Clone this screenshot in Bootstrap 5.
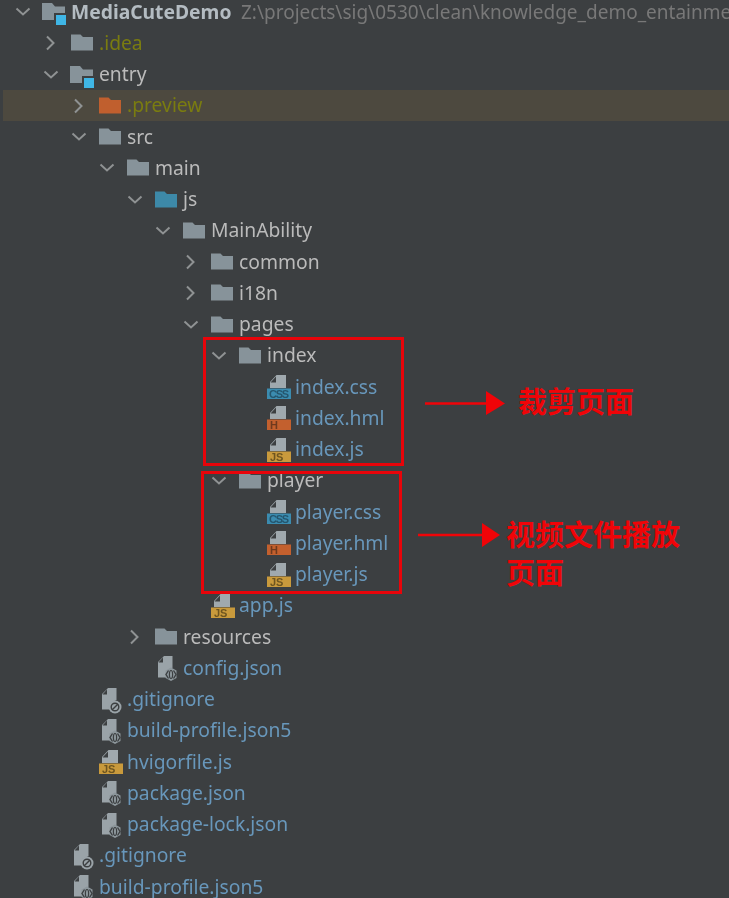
<!DOCTYPE html>
<html lang="en">
<head>
<meta charset="utf-8">
<title>Project tree</title>
<link rel="stylesheet" href="https://cdn.jsdelivr.net/npm/bootstrap@5.3.0/dist/css/bootstrap.min.css">
<style>
html,body{height:100%;}
body{background:#3c3f41;overflow:hidden;font-family:"Noto Sans","Open Sans",sans-serif;position:relative;}
.tree{margin-top:-3.6px;filter:blur(.5px);}
.tree-row{height:31.25px;font-size:19.3px;color:#bbb;white-space:nowrap;}
.tree-row.sel{background:#4d493f;margin-left:3px;}
.l0{padding-left:15px}.l1{padding-left:43px}.l2{padding-left:71px}.l3{padding-left:99px}.l4{padding-left:127px}.l5{padding-left:155px}.l6{padding-left:183px}.l7{padding-left:211px}.l8{padding-left:239px}
.sel.l2{padding-left:68px}
.chev{width:28px;height:24px;flex:none;}
.ico{width:28px;height:24px;flex:none;overflow:visible;}
.fname{color:#6897bb;}
.ign{color:#7a7c10;}
.root{font-weight:700;color:#b4bcc2;}
.pathtxt{color:#787878;margin-left:9.500px;font-size:19px;}
.redbox{position:absolute;border:3px solid #e8040a;}
.box-a{left:203px;top:337px;width:201px;height:129px;}
.box-b{left:201px;top:471px;width:201px;height:123px;}
.note{position:absolute;color:#f00408;font-family:"Liberation Serif","Noto Sans CJK SC",serif;font-weight:700;font-size:29px;line-height:38px;white-space:nowrap;}
.note-a{left:518px;top:384px;}
.note-b{left:506px;top:517px;}
.arrow{position:absolute;}
.arrow-a{left:424px;top:390px;}
.arrow-b{left:417px;top:522px;}
text{font-family:"Liberation Sans",sans-serif;font-weight:700;font-size:11px;}
</style>
</head>
<body>
<svg width="0" height="0" class="d-block position-absolute">
<defs>
<path id="cd" d="M1.500 8.500l6.500 6 6.500-6" fill="none" stroke="#8f9293" stroke-width="2"/>
<path id="cr" d="M4 5.500l6.500 6.500-6.500 6.500" fill="none" stroke="#8f9293" stroke-width="2"/>
<path id="fo" d="M0 3.500h9.500l2.500 2.500H22V19.500H0z"/>
<g id="mod"><path d="M-1 3h10l3 3.500H22V20H-1z" fill="#87939a"/><rect x="11" y="13" width="13" height="13" fill="#3c3f41"/><rect x="13" y="15" width="10" height="10" fill="#3fb6e6"/></g>
<path id="sh" d="M9.500 0H19V13H3V7zM9 1.500V7.500H3.500z" fill="#a0a9ae" fill-rule="evenodd"/>
<g id="css"><use href="#sh"/><rect y="13.500" width="24" height="10.500" fill="#3b8cb0"/><text x="12" y="22.800" text-anchor="middle" fill="#25566e" textLength="20">CSS</text></g>
<g id="htm"><use href="#sh"/><rect y="13.500" width="24" height="10.500" fill="#c3602e"/><text x="3" y="22.800" fill="#6f3a1e">H</text></g>
<g id="jsf"><use href="#sh"/><rect y="13.500" width="24" height="10.500" fill="#c99a3c"/><text x="3" y="22.800" fill="#6e5520">JS</text></g>
<g id="jsn"><path d="M9 0h8.500v12l-6 3 0 6.500H3V6zM8 1.500V6.500H3.500z" fill="#9aa3a8" fill-rule="evenodd"/><path d="M16 11.500l5.500 3v7.500l-5.500 3-5.500-3v-7.500z" fill="#8d979c"/><path d="M13.500 14.500l-2.500 4 2.500 4M18.500 14.500l2.500 4-2.500 4" fill="none" stroke="#3c3f41" stroke-width="1.400"/><ellipse cx="16" cy="18.500" rx="1.600" ry="4" fill="none" stroke="#3c3f41" stroke-width="1.200"/></g>
<g id="ign"><path d="M9 0h8.500v12l-6 3 0 6.500H3V6zM8 1.500V6.500H3.500z" fill="#9aa3a8" fill-rule="evenodd"/><circle cx="16" cy="19" r="6.500" fill="#9aa3a8"/><circle cx="16" cy="19" r="3.800" fill="none" stroke="#3c3f41" stroke-width="1.400"/><path d="M13 22l6-6" stroke="#3c3f41" stroke-width="1.400"/></g>
</defs>
</svg>
<div class="tree">
<div class="tree-row d-flex align-items-center l0"><svg class="chev"><use href="#cd"/></svg><svg class="ico"><use href="#mod"/></svg><span class="root">MediaCuteDemo</span><span class="pathtxt">Z:\projects\sig\0530\clean\knowledge_demo_entainme</span></div>
<div class="tree-row d-flex align-items-center l1"><svg class="chev"><use href="#cr"/></svg><svg class="ico" fill="#87939a"><use href="#fo"/></svg><span class="ign">.idea</span></div>
<div class="tree-row d-flex align-items-center l1"><svg class="chev"><use href="#cd"/></svg><svg class="ico"><use href="#mod"/></svg><span>entry</span></div>
<div class="tree-row sel d-flex align-items-center l2"><svg class="chev"><use href="#cr"/></svg><svg class="ico" fill="#c05f2e"><use href="#fo"/></svg><span class="ign">.preview</span></div>
<div class="tree-row d-flex align-items-center l2"><svg class="chev"><use href="#cd"/></svg><svg class="ico" fill="#87939a"><use href="#fo"/></svg><span>src</span></div>
<div class="tree-row d-flex align-items-center l3"><svg class="chev"><use href="#cd"/></svg><svg class="ico" fill="#87939a"><use href="#fo"/></svg><span>main</span></div>
<div class="tree-row d-flex align-items-center l4"><svg class="chev"><use href="#cd"/></svg><svg class="ico" fill="#3d89a8"><use href="#fo"/></svg><span>js</span></div>
<div class="tree-row d-flex align-items-center l5"><svg class="chev"><use href="#cd"/></svg><svg class="ico" fill="#87939a"><use href="#fo"/></svg><span>MainAbility</span></div>
<div class="tree-row d-flex align-items-center l6"><svg class="chev"><use href="#cr"/></svg><svg class="ico" fill="#87939a"><use href="#fo"/></svg><span>common</span></div>
<div class="tree-row d-flex align-items-center l6"><svg class="chev"><use href="#cr"/></svg><svg class="ico" fill="#87939a"><use href="#fo"/></svg><span>i18n</span></div>
<div class="tree-row d-flex align-items-center l6"><svg class="chev"><use href="#cd"/></svg><svg class="ico" fill="#87939a"><use href="#fo"/></svg><span>pages</span></div>
<div class="tree-row d-flex align-items-center l7"><svg class="chev"><use href="#cd"/></svg><svg class="ico" fill="#87939a"><use href="#fo"/></svg><span>index</span></div>
<div class="tree-row d-flex align-items-center l8"><span class="chev"></span><svg class="ico"><use href="#css"/></svg><span class="fname">index.css</span></div>
<div class="tree-row d-flex align-items-center l8"><span class="chev"></span><svg class="ico"><use href="#htm"/></svg><span class="fname">index.hml</span></div>
<div class="tree-row d-flex align-items-center l8"><span class="chev"></span><svg class="ico"><use href="#jsf"/></svg><span class="fname">index.js</span></div>
<div class="tree-row d-flex align-items-center l7"><svg class="chev"><use href="#cd"/></svg><svg class="ico" fill="#87939a"><use href="#fo"/></svg><span>player</span></div>
<div class="tree-row d-flex align-items-center l8"><span class="chev"></span><svg class="ico"><use href="#css"/></svg><span class="fname">player.css</span></div>
<div class="tree-row d-flex align-items-center l8"><span class="chev"></span><svg class="ico"><use href="#htm"/></svg><span class="fname">player.hml</span></div>
<div class="tree-row d-flex align-items-center l8"><span class="chev"></span><svg class="ico"><use href="#jsf"/></svg><span class="fname">player.js</span></div>
<div class="tree-row d-flex align-items-center l6"><span class="chev"></span><svg class="ico"><use href="#jsf"/></svg><span class="fname">app.js</span></div>
<div class="tree-row d-flex align-items-center l4"><svg class="chev"><use href="#cr"/></svg><svg class="ico" fill="#87939a"><use href="#fo"/></svg><span>resources</span></div>
<div class="tree-row d-flex align-items-center l4"><span class="chev"></span><svg class="ico"><use href="#jsn"/></svg><span class="fname">config.json</span></div>
<div class="tree-row d-flex align-items-center l2"><span class="chev"></span><svg class="ico"><use href="#ign"/></svg><span class="fname">.gitignore</span></div>
<div class="tree-row d-flex align-items-center l2"><span class="chev"></span><svg class="ico"><use href="#jsn"/></svg><span class="fname">build-profile.json5</span></div>
<div class="tree-row d-flex align-items-center l2"><span class="chev"></span><svg class="ico"><use href="#jsf"/></svg><span class="fname">hvigorfile.js</span></div>
<div class="tree-row d-flex align-items-center l2"><span class="chev"></span><svg class="ico"><use href="#jsn"/></svg><span class="fname">package.json</span></div>
<div class="tree-row d-flex align-items-center l2"><span class="chev"></span><svg class="ico"><use href="#jsn"/></svg><span class="fname">package-lock.json</span></div>
<div class="tree-row d-flex align-items-center l1"><span class="chev"></span><svg class="ico"><use href="#ign"/></svg><span class="fname">.gitignore</span></div>
<div class="tree-row d-flex align-items-center l1"><span class="chev"></span><svg class="ico"><use href="#jsn"/></svg><span class="fname">build-profile.json5</span></div>
</div>
<div class="redbox box-a"></div>
<div class="redbox box-b"></div>
<svg class="arrow arrow-a" width="82" height="26"><path d="M1 13.500h64" stroke="#f00408" stroke-width="2.500"/><path d="M62 1l19 12.500L62 25z" fill="#f00408"/></svg>
<svg class="arrow arrow-b" width="84" height="26"><path d="M1 13h66" stroke="#f00408" stroke-width="2.500"/><path d="M65 1l18 12L65 25z" fill="#f00408"/></svg>
<div class="note note-a">裁剪页面</div>
<div class="note note-b">视频文件播放<br>页面</div>
<script src="https://cdn.jsdelivr.net/npm/bootstrap@5.3.0/dist/js/bootstrap.bundle.min.js"></script>
</body>
</html>
